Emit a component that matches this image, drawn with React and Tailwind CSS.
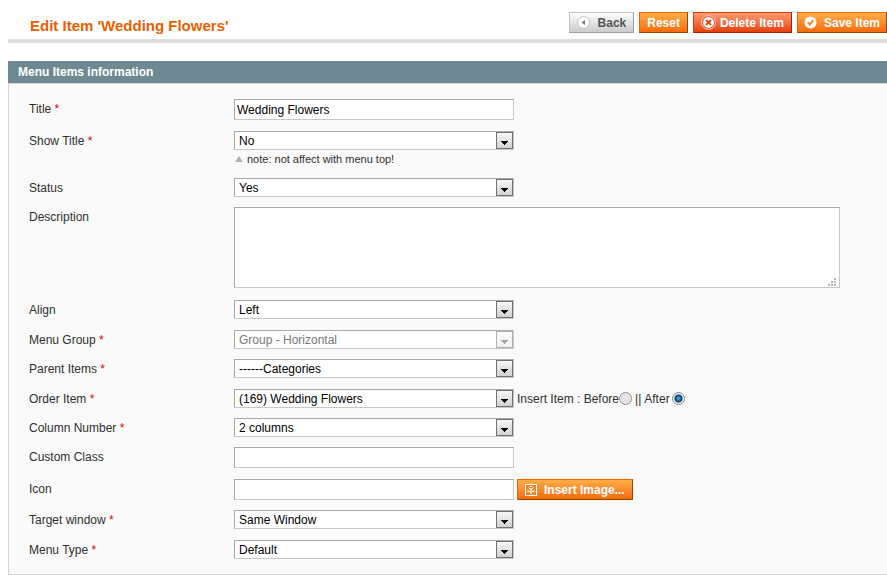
import React, { useState } from "react";
import clsx from "clsx";

const fieldBorder =
  "border border-t-[#a9a9a9] border-l-[#a9a9a9] border-r-[#c8c8c8] border-b-[#c8c8c8]";

const buttonStyles = {
  back: "text-[#555] border-t-[#c4c4c4] border-l-[#c4c4c4] border-r-[#a0a0a0] border-b-[#a0a0a0] from-[#fdfdfd] to-[#cccccc]",
  orange:
    "text-white border-t-[#ed6502] border-l-[#ed6502] border-r-[#a04300] border-b-[#a04300] from-[#ffac47] to-[#f46b03]",
  danger:
    "text-white border-t-[#d24403] border-l-[#d24403] border-r-[#a92000] border-b-[#a92000] from-[#fb9b70] to-[#e63c00]",
};

const Button = ({ variant = "orange", className, children, ...props }) => (
  <button
    type="button"
    className={clsx(
      "flex h-[21px] shrink-0 items-center border bg-linear-to-b text-xs font-bold whitespace-nowrap",
      buttonStyles[variant],
      className,
    )}
    {...props}
  >
    {children}
  </button>
);

const BackIcon = () => (
  <svg width="13" height="13" viewBox="0 0 13 13">
    <circle cx="6.5" cy="6.5" r="5.9" fill="#fff" stroke="#c3c3c3" />
    <path d="M8 4v5L4.6 6.5z" fill="#777" />
  </svg>
);

const DeleteIcon = () => (
  <svg width="15" height="15" viewBox="0 0 15 15">
    <circle cx="7.5" cy="7.5" r="6.9" fill="#e05a2b" stroke="#ffd0bd" />
    <circle cx="7.5" cy="7.5" r="5.4" fill="#fff" />
    <path d="M5 5l5 5M10 5l-5 5" stroke="#d84a14" strokeWidth="2" />
  </svg>
);

const SaveIcon = () => (
  <svg width="13" height="13" viewBox="0 0 13 13">
    <circle cx="6.5" cy="6.5" r="6" fill="#fff" />
    <path d="M4 6.6l1.8 2L9.2 4.3" fill="none" stroke="#f27a12" strokeWidth="1.7" />
  </svg>
);

const ImageIcon = () => (
  <svg width="12" height="12" viewBox="0 0 12 12">
    <rect x="0.5" y="0.5" width="11" height="11" fill="#f58220" stroke="#fff" />
    <path
      d="M6 10.5V4M6 8.5L2.5 6M6 8.5L9.5 6M6 6L3.5 3.5M6 6l2.8-3M4.8 2.5h2M2.3 7.8h1.5M8.2 7.8h1.5"
      fill="none"
      stroke="#fff"
    />
  </svg>
);

const Row = ({ id, label, required, spacing = "pb-[10px]", children }) => (
  <div className={clsx("flex items-start", spacing)}>
    <label htmlFor={id} className="h-[19px] w-[205px] shrink-0 leading-5">
      {label}
      {required && <span className="text-[#d40707]"> *</span>}
    </label>
    <div className="min-w-0 flex-1">{children}</div>
  </div>
);

const Select = ({ id, options, disabled, ...props }) => (
  <div className="relative w-[280px] shrink-0">
    <select
      id={id}
      disabled={disabled}
      className={clsx(
        "block h-[19px] w-full appearance-none bg-white pt-px pr-5 pl-1 leading-4",
        fieldBorder,
        disabled ? "text-[#777] opacity-100" : "text-black",
      )}
      {...props}
    >
      {options.map((option) => (
        <option key={option}>{option}</option>
      ))}
    </select>
    <span
      className={clsx(
        "pointer-events-none absolute top-px right-px flex size-[17px] items-end justify-center border bg-linear-to-b pb-[3px]",
        disabled
          ? "border-[#adb2b5] from-[#fcfcfc] to-[#f0f0f0] text-[#a5a5a5]"
          : "border-[#707070] from-[#f6f6f6] to-[#d2d2d2] text-black",
      )}
    >
      <svg width="7" height="4" viewBox="0 0 7 4" shapeRendering="crispEdges">
        <path d="M0 0h7v1H0zM1 1h5v1H1zM2 2h3v1H2zM3 3h1v1H3z" fill="currentColor" />
      </svg>
    </span>
  </div>
);

const TextInput = ({ id, ...props }) => (
  <input
    id={id}
    type="text"
    className={clsx(
      "block h-[21px] w-[280px] shrink-0 bg-white px-0.5 text-black",
      fieldBorder,
    )}
    {...props}
  />
);

const Radio = ({ className, ...props }) => (
  <input
    type="radio"
    className={clsx(
      "size-[13px] appearance-none rounded-full border border-[#8e8f8f] bg-radial from-[#e6e6e6] from-30% to-[#c9c9c9] shadow-[inset_0_0_0_1px_#f4f4f4] checked:border-[#7b8a92] checked:from-[#3fb4e6] checked:from-5% checked:via-[#0d3c5c] checked:via-45% checked:to-[#e8eef1] checked:to-60%",
      className,
    )}
    {...props}
  />
);

const EditMenuItem = () => {
  const [title, setTitle] = useState("Wedding Flowers");
  const [customClass, setCustomClass] = useState("");
  const [icon, setIcon] = useState("");
  const [position, setPosition] = useState("after");

  return (
    <div className="overflow-hidden bg-white pl-2 font-['Liberation_Sans',Arial,sans-serif] text-xs text-[#2f2f2f]">
      {/* Header */}
      <div className="flex items-start justify-between border-b-4 border-[#dfdfdf] pt-3 pb-1.5">
        <h3 className="mt-1 -mb-1 pl-[22px] text-[15px] leading-5 font-bold whitespace-nowrap text-[#eb5e00]">
          Edit Item 'Wedding Flowers'
        </h3>
        <div className="flex gap-[5px]">
          <Button variant="back" className="gap-2 px-[7px]">
            <BackIcon />
            Back
          </Button>
          <Button className="px-[7px]">Reset</Button>
          <Button variant="danger" className="gap-1 px-[7px]">
            <DeleteIcon />
            Delete Item
          </Button>
          <Button className="gap-[7px] px-1.5">
            <SaveIcon />
            Save Item
          </Button>
        </div>
      </div>

      {/* Form */}
      <div className="mt-[18px]">
        <h4 className="bg-[#6f8992] pl-[10px] leading-[22px] font-bold text-white">
          Menu Items information
        </h4>
        <form className="border border-r-0 border-[#d6d6d6] bg-[#fafafa] pt-[15px] pb-[5px] pl-5">
          <Row id="title" label="Title" required spacing="pb-[11px]">
            <TextInput
              id="title"
              value={title}
              onChange={(e) => setTitle(e.target.value)}
            />
          </Row>

          <Row id="show_title" label="Show Title" required>
            <Select id="show_title" options={["No", "Yes"]} />
            <p className="flex h-[18px] items-center gap-1 pl-px text-[11px]">
              <svg width="8" height="6" viewBox="0 0 8 6">
                <path d="M4 0l4 6H0z" fill="#a9b5b8" />
              </svg>
              note: not affect with menu top!
            </p>
          </Row>

          <Row id="status" label="Status">
            <Select id="status" options={["Yes", "No"]} />
          </Row>

          <Row id="description" label="Description" spacing="pb-3">
            <div className="relative w-[606px] max-w-full">
              <textarea
                id="description"
                className={clsx(
                  "block h-[81px] w-full resize-none bg-white px-0.5 text-black",
                  fieldBorder,
                )}
              />
              <svg
                className="pointer-events-none absolute right-1 bottom-0.5"
                width="8"
                height="8"
                viewBox="0 0 8 8"
                shapeRendering="crispEdges"
              >
                <path
                  d="M6 0h2v2H6zM3 3h2v2H3zM6 3h2v2H6zM0 6h2v2H0zM3 6h2v2H3zM6 6h2v2H6z"
                  fill="#b8b8b8"
                />
              </svg>
            </div>
          </Row>

          <Row id="align" label="Align" spacing="pb-[11px]">
            <Select id="align" options={["Left", "Right"]} />
          </Row>

          <Row id="group" label="Menu Group" required>
            <Select id="group" options={["Group - Horizontal"]} disabled />
          </Row>

          <Row id="parent" label="Parent Items" required spacing="pb-[11px]">
            <Select id="parent" options={["------Categories"]} />
          </Row>

          <Row id="order" label="Order Item" required>
            <div className="flex h-[19px] items-center">
              <Select id="order" options={["(169) Wedding Flowers"]} />
              <span className="ml-[3px] whitespace-pre">Insert Item : </span>
              <label htmlFor="before">Before</label>
              <Radio
                id="before"
                name="position"
                checked={position === "before"}
                onChange={() => setPosition("before")}
              />
              <span className="mx-[3px]">||</span>
              <label htmlFor="after">After</label>
              <Radio
                id="after"
                name="position"
                className="ml-0.5"
                checked={position === "after"}
                onChange={() => setPosition("after")}
              />
            </div>
          </Row>

          <Row id="columns" label="Column Number" required>
            <Select id="columns" options={["2 columns", "1 column"]} />
          </Row>

          <Row id="custom_class" label="Custom Class" spacing="pb-[11px]">
            <TextInput
              id="custom_class"
              value={customClass}
              onChange={(e) => setCustomClass(e.target.value)}
            />
          </Row>

          <Row id="icon" label="Icon">
            <div className="flex h-[21px] items-center gap-[3px]">
              <TextInput
                id="icon"
                value={icon}
                onChange={(e) => setIcon(e.target.value)}
              />
              <Button className="gap-[7px] px-[7px]">
                <ImageIcon />
                Insert Image...
              </Button>
            </div>
          </Row>

          <Row id="target" label="Target window" required spacing="pb-[11px]">
            <Select id="target" options={["Same Window", "New Window"]} />
          </Row>

          <Row id="type" label="Menu Type" required>
            <Select id="type" options={["Default"]} />
          </Row>
        </form>
      </div>
    </div>
  );
};

export default EditMenuItem;
